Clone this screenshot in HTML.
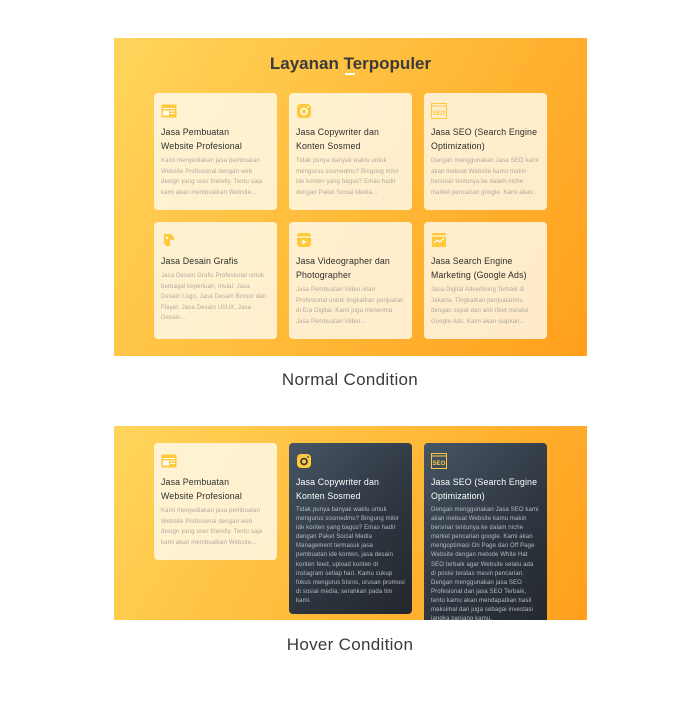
<!DOCTYPE html>
<html><head><style>
*{margin:0;padding:0;box-sizing:border-box}
body{width:700px;height:703px;background:#fff;font-family:"Liberation Sans",sans-serif;position:relative;overflow:hidden}
.panel{position:absolute;left:114px;width:473px;background:linear-gradient(120deg,#ffd55c 0%,#ffbb3a 50%,#ff9f1c 100%);overflow:hidden}
.card{position:absolute;width:123px;background:rgba(255,250,238,0.82);border-radius:4px;padding:10px 7px}
.card.dark{background:linear-gradient(135deg,#475565 0%,#2e3640 55%,#23272c 100%)}
.card h3{font-size:8.8px;font-weight:normal;color:#2d2d2d;line-height:14px;margin-top:6px;letter-spacing:.15px}
.card p{font-size:6px;color:#b0aaa0;line-height:10.5px;margin-top:3px;letter-spacing:.12px}
.card.dark h3{color:#fff}
.card.dark p{color:#b8bcc2;line-height:9.1px}
.ic{width:16px;height:16px;display:block}
.lbl{position:absolute;left:0;width:700px;text-align:center;font-size:17px;color:#3a3a3a;letter-spacing:.3px}
</style></head><body>
<div class="panel" style="top:38px;height:318px">
<div style="position:absolute;top:16px;width:473px;text-align:center;font-size:17px;font-weight:bold;color:#3b3b3b">Layanan Terpopuler</div>
<div style="position:absolute;left:231px;top:35px;width:10px;height:1.5px;background:#fff"></div>

<div class="card" style="left:40px;top:55px;height:117px">
<svg class="ic" viewBox="0 0 16 16"><rect x="0.5" y="1.5" width="15" height="13" rx="1" fill="#ffc93c"/><rect x="2" y="5" width="12" height="1" fill="#fff"/><rect x="2" y="7.5" width="6" height="5" fill="#fff"/><rect x="9" y="7.5" width="5" height="1" fill="#fff"/><rect x="9" y="10" width="5" height="1" fill="#fff"/></svg>
<h3>Jasa Pembuatan<br>Website Profesional</h3>
<p>Kami menyediakan jasa pembuatan Website Profesional dengan web design yang user friendly. Tentu saja kami akan membuatkan Website...</p></div>

<div class="card" style="left:175px;top:55px;height:117px">
<svg class="ic" viewBox="0 0 16 16"><rect x="1" y="1" width="14" height="14" rx="4" fill="#ffc93c"/><circle cx="8" cy="8.5" r="3" fill="none" stroke="#fff" stroke-width="1.6"/><circle cx="12" cy="4" r="0.9" fill="#fff"/></svg>
<h3>Jasa Copywriter dan<br>Konten Sosmed</h3>
<p>Tidak punya banyak waktu untuk mengurus sosmedmu? Bingung mikir ide konten yang bagus? Emas hadir dengan Paket Social Media...</p></div>

<div class="card" style="left:310px;top:55px;height:117px">
<svg class="ic" viewBox="0 0 16 16"><rect x="0.5" y="0.5" width="15" height="15" fill="none" stroke="#ffc93c"/><line x1="0.5" y1="3" x2="15.5" y2="3" stroke="#ffc93c"/><text x="8" y="12" font-size="6" font-weight="bold" text-anchor="middle" fill="#ffc93c" font-family="Liberation Sans">SEO</text></svg>
<h3>Jasa SEO (Search Engine<br>Optimization)</h3>
<p>Dengan menggunakan Jasa SEO kami akan mebuat Website kamu makin bersinar tentunya ke dalam niche market pencarian google. Kami akan...</p></div>

<div class="card" style="left:40px;top:184px;height:117px">
<svg class="ic" viewBox="0 0 16 16"><path d="M3 2h7l3 3v3H9v6H5l-2-3z" fill="#ffc93c"/><circle cx="6" cy="6" r="1.2" fill="#fff"/></svg>
<h3>Jasa Desain Grafis</h3>
<p>Jasa Desain Grafis Profesional untuk berbagai keperluan, mulai: Jasa Desain Logo, Jasa Desain Brosur dan Flayer, Jasa Desain UI/UX, Jasa Desain...</p></div>

<div class="card" style="left:175px;top:184px;height:117px">
<svg class="ic" viewBox="0 0 16 16"><rect x="1" y="1" width="14" height="14" rx="3" fill="#ffc93c"/><line x1="1" y1="5" x2="15" y2="5" stroke="#fff"/><path d="M6.5 7.5v5l4-2.5z" fill="#fff"/></svg>
<h3>Jasa Videographer dan<br>Photographer</h3>
<p>Jasa Pembuatan Video iklan Profesional untuk tingkatkan penjualan di Era Digital. Kami juga menerima Jasa Pembuatan Video...</p></div>

<div class="card" style="left:310px;top:184px;height:117px">
<svg class="ic" viewBox="0 0 16 16"><rect x="1" y="1" width="14" height="14" rx="1" fill="#ffc93c"/><line x1="1" y1="4" x2="15" y2="4" stroke="#fff"/><path d="M3 11l3-3 3 2 4-4" stroke="#fff" fill="none" stroke-width="1.2"/></svg>
<h3>Jasa Search Engine<br>Marketing (Google Ads)</h3>
<p>Jasa Digital Advertising Terbaik di Jakarta. Tingkatkan penjualanmu dengan cepat dan anti ribet melalui Google Ads. Kami akan siapkan...</p></div>
</div>
<div class="lbl" style="top:370px">Normal Condition</div>

<div class="panel" style="top:426px;height:194px">
<div class="card" style="left:40px;top:17px;height:117px">
<svg class="ic" viewBox="0 0 16 16"><rect x="0.5" y="1.5" width="15" height="13" rx="1" fill="#ffc93c"/><rect x="2" y="5" width="12" height="1" fill="#fff"/><rect x="2" y="7.5" width="6" height="5" fill="#fff"/><rect x="9" y="7.5" width="5" height="1" fill="#fff"/><rect x="9" y="10" width="5" height="1" fill="#fff"/></svg>
<h3>Jasa Pembuatan<br>Website Profesional</h3>
<p>Kami menyediakan jasa pembuatan Website Profesional dengan web design yang user friendly. Tentu saja kami akan membuatkan Website...</p></div>

<div class="card dark" style="left:175px;top:17px;height:171px">
<svg class="ic" viewBox="0 0 16 16"><rect x="1" y="1" width="14" height="14" rx="4" fill="#ffc93c"/><circle cx="8" cy="8.5" r="3" fill="none" stroke="#2d3540" stroke-width="1.6"/><circle cx="12" cy="4" r="0.9" fill="#2d3540"/></svg>
<h3>Jasa Copywriter dan<br>Konten Sosmed</h3>
<p>Tidak punya banyak waktu untuk mengurus sosmedmu? Bingung mikir ide konten yang bagus? Emas hadir dengan Paket Social Media Management termasuk jasa pembuatan ide konten, jasa desain konten feed, upload konten di instagram setiap hari. Kamu cukup fokus mengurus bisnis, urusan promosi di sosial media, serahkan pada tim kami.</p></div>

<div class="card dark" style="left:310px;top:17px;height:190px">
<svg class="ic" viewBox="0 0 16 16"><rect x="0.5" y="0.5" width="15" height="15" fill="none" stroke="#ffc93c"/><line x1="0.5" y1="3" x2="15.5" y2="3" stroke="#ffc93c"/><text x="8" y="12" font-size="6" font-weight="bold" text-anchor="middle" fill="#ffc93c" font-family="Liberation Sans">SEO</text></svg>
<h3>Jasa SEO (Search Engine<br>Optimization)</h3>
<p>Dengan menggunakan Jasa SEO kami akan mebuat Website kamu makin bersinar tentunya ke dalam niche market pencarian google. Kami akan mengoptimasi On Page dan Off Page Website dengan metode White Hat SEO terbaik agar Website selalu ada di posisi teratas mesin pencarian. Dengan menggunakan jasa SEO Profesional dan jasa SEO Terbaik, tentu kamu akan mendapatkan hasil maksimal dan juga sebagai investasi jangka panjang kamu.</p></div>
</div>
<div class="lbl" style="top:635px">Hover Condition</div>
</body></html>
